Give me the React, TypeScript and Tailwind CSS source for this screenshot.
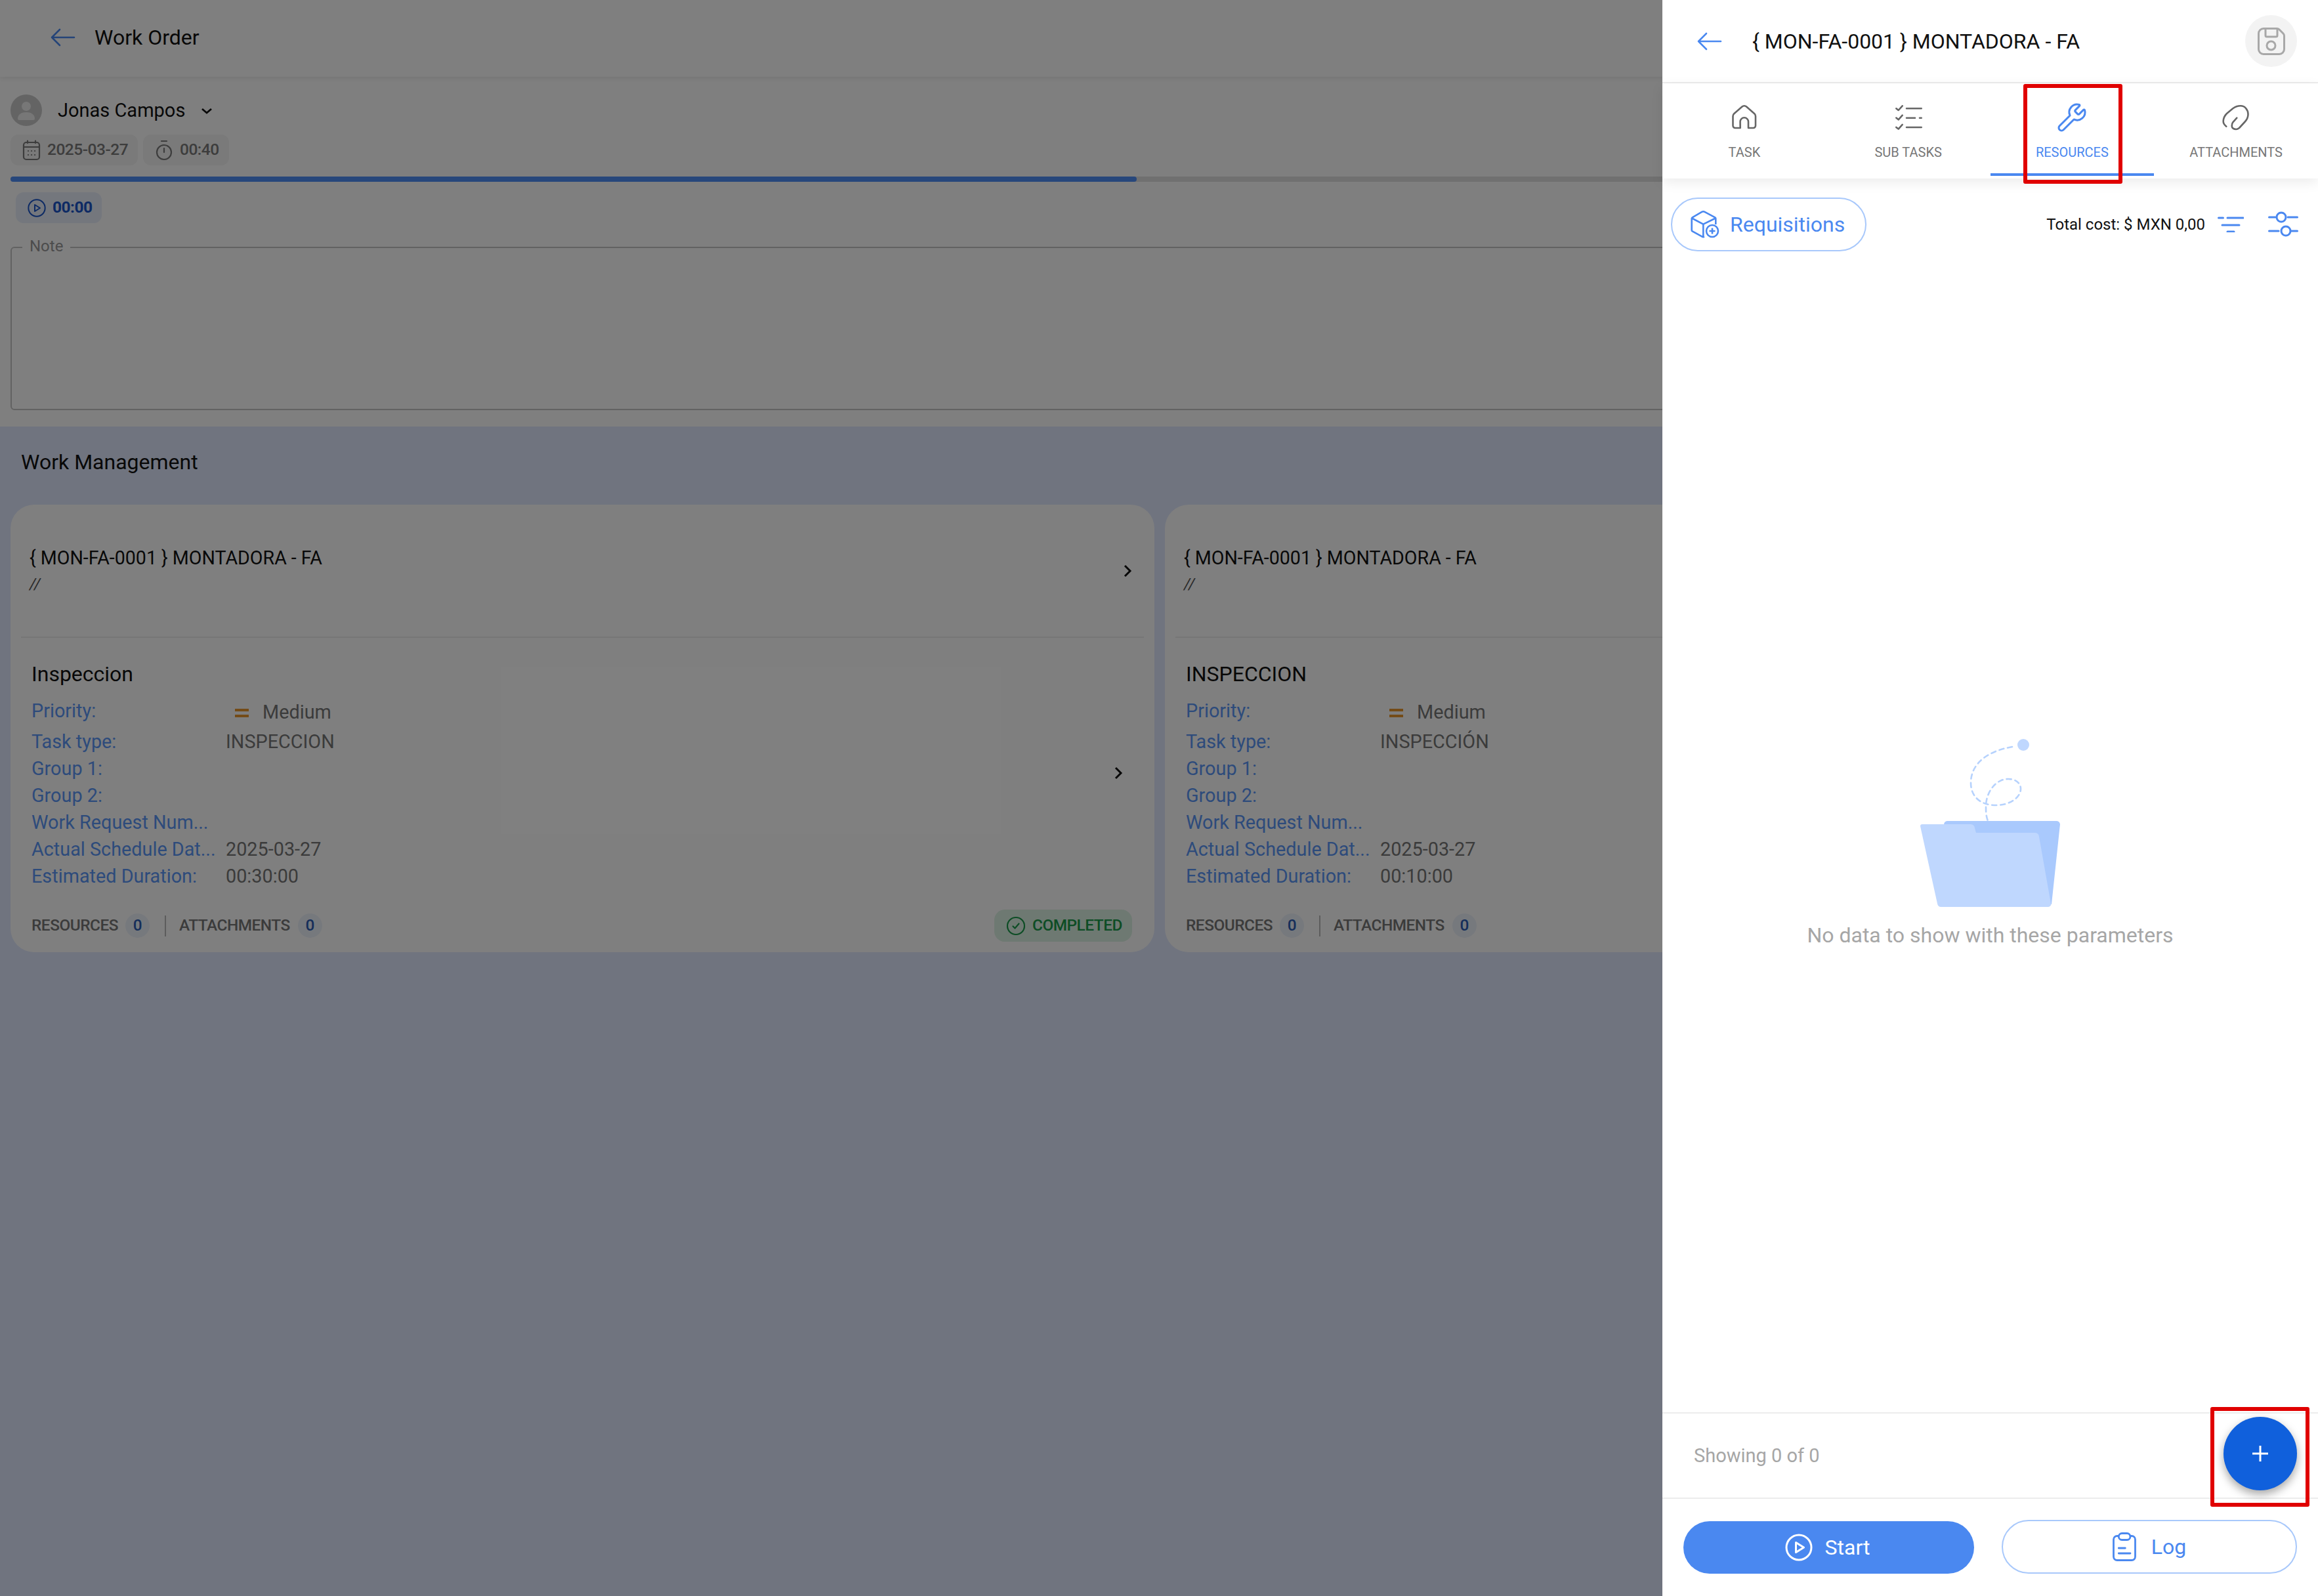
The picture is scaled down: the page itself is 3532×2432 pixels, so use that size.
import React from 'react';
import { Wrench } from 'lucide-react';

const BackArrow = ({ className }: { className: string }) => (
  <svg viewBox="0 0 38 28" className={`h-[28px] w-[38px] flex-none ${className}`} fill="none" stroke="currentColor" strokeWidth="2.6" strokeLinecap="round" strokeLinejoin="round">
    <path d="M36 14H2M14 2 2 14l12 12" />
  </svg>
);

const PlayCircle = ({ className }: { className: string }) => (
  <svg viewBox="0 0 42 42" className={`flex-none ${className}`} fill="none" stroke="currentColor" strokeWidth="3" strokeLinejoin="round">
    <circle cx="21" cy="21" r="19" />
    <path d="M16.5 13.5v15L28.5 21z" />
  </svg>
);

// Card on the dimmed page behind the drawer
const TaskCard = ({ name, taskType, duration, completed }: { name: string; taskType: string; duration: string; completed?: boolean }) => {
  const rows: [string, string][] = [
    ['Task type:', taskType],
    ['Group 1:', ''],
    ['Group 2:', ''],
    ['Work Request Num...', ''],
    ['Actual Schedule Dat...', '2025-03-27'],
    ['Estimated Duration:', duration],
  ];

  return (
    <div className="h-[682px] w-[1743px] flex-none rounded-[36px] bg-white">
      <div className="mx-[16px] flex h-[203px] items-center justify-between border-b-2 border-[#ececec] pl-[13px] pr-[18px]">
        <div>
          <div className="text-[28.6px] leading-[40px] text-[#111]">{'{ MON-FA-0001 } MONTADORA - FA'}</div>
          <div className="text-[24px] italic leading-[40px] text-[#555]">//</div>
        </div>
        <svg viewBox="0 0 14 20" className="h-[20px] w-[14px]" fill="none" stroke="#111" strokeWidth="3"><path d="m3 2 8 8-8 8" /></svg>
      </div>
      <div className="flex items-center justify-between pl-[32px] pr-[48px] pt-[35px]">
        <div>
          <div className="text-[32px] leading-[40px] text-[#111]">{name}</div>
          <div className="mt-[15px] flex h-[48px] items-center">
            <span className="w-[296px] flex-none pb-[5px] text-[28.8px] text-[#5b96f7]">Priority:</span>
            <span className="flex items-center pl-[14px] text-[28.8px] text-[#777]">
              <span className="flex w-[21px] flex-col gap-[5px]">
                <span className="h-[4px] bg-[#e8962f]" />
                <span className="h-[4px] bg-[#e8962f]" />
              </span>
              <span className="ml-[21px]">Medium</span>
            </span>
          </div>
          {rows.map(([label, value]) => (
            <div key={label} className="flex h-[41px] items-center text-[28.8px]">
              <span className="w-[296px] flex-none text-[#5b96f7]">{label}</span>
              <span className="text-[#777]">{value}</span>
            </div>
          ))}
        </div>
        <svg viewBox="0 0 14 20" className="mb-[8px] h-[20px] w-[14px]" fill="none" stroke="#111" strokeWidth="3"><path d="m3 2 8 8-8 8" /></svg>
      </div>
      <div className="mt-[30px] flex h-[49px] items-center justify-between pl-[32px] pr-[34px]">
        <div className="flex items-center text-[24.4px] font-medium tracking-[-0.5px] text-[#777]">
          <span>RESOURCES</span>
          <span className="ml-[11px] flex h-[37px] w-[37px] items-center justify-center rounded-full bg-[#edf2fb] text-[#2a5cb4]">0</span>
          <span className="ml-[23px] h-[32px] w-[2px] bg-[#bbb]" />
          <span className="ml-[20px]">ATTACHMENTS</span>
          <span className="ml-[12px] flex h-[37px] w-[37px] items-center justify-center rounded-full bg-[#edf2fb] text-[#2a5cb4]">0</span>
        </div>
        {completed && (
          <div className="flex h-[49px] w-[210px] items-center gap-[10px] rounded-[16px] bg-[#ddf3e4] pl-[18px] text-[24.4px] font-medium tracking-[-0.5px] text-[#1a9a4a]">
            <svg viewBox="0 0 30 30" className="h-[30px] w-[30px] flex-none" fill="none" stroke="currentColor" strokeWidth="2.2" strokeLinecap="round" strokeLinejoin="round">
              <circle cx="15" cy="15" r="13" />
              <path d="m10.5 15.5 3 3 6-7" />
            </svg>
            COMPLETED
          </div>
        )}
      </div>
    </div>
  );
};

export default function App() {
  return (
    <div className="relative h-[2432px] w-[3532px] overflow-hidden bg-[#e0e8fe] [font-family:Roboto,sans-serif]">
      {/* Page behind the drawer */}
      <div className="relative flex h-[117px] items-center gap-[29px] bg-white pb-[3px] pl-[77px] shadow-[0_3px_8px_rgba(0,0,0,0.08)]">
        <BackArrow className="text-[#4a88f0]" />
        <span className="text-[32px] text-[#111]">Work Order</span>
      </div>

      <div className="h-[533px] bg-white pl-[16px] pr-[16px] pt-[27px]">
        <div className="flex h-[48px] items-center">
          <div className="flex h-[48px] w-[48px] items-end justify-center overflow-hidden rounded-full bg-[#c9c9c9]">
            <svg viewBox="0 0 48 48" className="h-[48px] w-[48px]" fill="#eee">
              <circle cx="24" cy="18" r="7" />
              <path d="M11 37c0-7 6-10 13-10s13 3 13 10c0 1-1 2-2 2H13c-1 0-2-1-2-2z" />
            </svg>
          </div>
          <span className="ml-[24px] pt-[2px] text-[29px] text-[#111]">Jonas Campos</span>
          <svg viewBox="0 0 18 10" className="ml-[24px] mt-[2px] h-[10px] w-[18px]" fill="none" stroke="#111" strokeWidth="2.8"><path d="m2 2 7 6 7-6" /></svg>
        </div>

        <div className="mt-[13px] flex gap-[8px] text-[24.5px] font-medium tracking-[-0.5px] text-[#7a7a7a]">
          <div className="flex h-[47px] w-[194px] items-center rounded-[12px] bg-[#f4f4f4] pl-[18px]">
            <svg viewBox="0 0 28 32" className="h-[32px] w-[28px] flex-none" fill="none" stroke="currentColor" strokeWidth="2.2" strokeLinecap="round">
              <rect x="2" y="4" width="24" height="26" rx="4" />
              <path d="M2 11h24M8 1.5V5M20 1.5V5M9 17h.1M14 17h.1M19 17h.1M9 23h.1M14 23h.1M19 23h.1" />
            </svg>
            <span className="ml-[10px]">2025-03-27</span>
          </div>
          <div className="flex h-[47px] w-[131px] items-center rounded-[12px] bg-[#f4f4f4] pl-[19px]">
            <svg viewBox="0 0 26 32" className="h-[32px] w-[26px] flex-none" fill="none" stroke="currentColor" strokeWidth="2.2" strokeLinecap="round">
              <circle cx="13" cy="19" r="11" />
              <path d="M9 2h8M13 13v6" />
            </svg>
            <span className="ml-[11px]">00:40</span>
          </div>
        </div>

        <div className="mt-[17px] h-[8px] rounded-full bg-[#e0e0e0]">
          <div className="h-[8px] w-[1716px] rounded-full bg-[#4f8ef7]" />
        </div>

        <div className="ml-[8px] mt-[16px] flex h-[47px] w-[131px] items-center rounded-[12px] bg-[#e8effb] pl-[18px] text-[24.5px] font-bold tracking-[-0.5px] text-[#1a55c9]">
          <PlayCircle className="h-[28px] w-[28px]" />
          <span className="ml-[10px]">00:00</span>
        </div>

        <fieldset className="mt-[21px] h-[264px] rounded-[6px] border-2 border-[#c4c4c4] pl-[16px]">
          <legend className="px-[11px] pb-[3px] text-[24px] leading-[28px] text-[#999]">Note</legend>
        </fieldset>
      </div>

      <div className="pl-[16px]">
        <div className="pb-[45px] pl-[16px] pt-[34px] text-[32px] leading-[40px] text-[#111]">Work Management</div>
        <div className="flex gap-[16px]">
          <TaskCard name="Inspeccion" taskType="INSPECCION" duration="00:30:00" completed />
          <TaskCard name="INSPECCION" taskType="INSPECCIÓN" duration="00:10:00" />
        </div>
      </div>

      {/* Dimming layer */}
      <div className="absolute inset-0 bg-black/50" />

      {/* Drawer */}
      <div className="absolute bottom-0 right-0 top-0 flex w-[999px] flex-col bg-white">
        <div className="flex h-[127px] flex-none items-center border-b-2 border-[#ececec] pl-[53px] pr-[32px]">
          <BackArrow className="text-[#4a88f0]" />
          <span className="ml-[46px] pt-[1px] text-[32px] text-[#111]">{'{ MON-FA-0001 } MONTADORA - FA'}</span>
          <button className="ml-auto flex h-[79px] w-[79px] items-center justify-center rounded-full bg-[#f3f3f3]">
            <svg viewBox="0 0 42 42" className="h-[42px] w-[42px]" fill="none" stroke="#a8a8a8" strokeWidth="3" strokeLinejoin="round">
              <path d="M9 1.5h20.5a5 5 0 0 1 3.5 1.5l6 6a5 5 0 0 1 1.5 3.5V33a7.5 7.5 0 0 1-7.5 7.5H9A7.5 7.5 0 0 1 1.5 33V9A7.5 7.5 0 0 1 9 1.5z" />
              <path d="M12 2v10a2 2 0 0 0 2 2h14a2 2 0 0 0 2-2V3" />
              <circle cx="20.5" cy="27.5" r="6.5" />
            </svg>
          </button>
        </div>

        <div className="relative z-10 grid h-[145px] flex-none grid-cols-4 bg-white text-[20px] text-[#777] shadow-[0_6px_18px_rgba(0,0,0,0.08)]">
          <div className="flex flex-col items-center pt-[32px]">
            <svg viewBox="0 0 40 40" className="h-[40px] w-[40px]" fill="none" stroke="#666" strokeWidth="2.6" strokeLinejoin="round">
              <path d="M13.7 36H6a3.5 3.5 0 0 1-3.5-3.5V18a5 5 0 0 1 1.7-3.7L16.5 3.5a5 5 0 0 1 6.6 0l12.2 10.8a5 5 0 0 1 1.7 3.7v14.5a3.5 3.5 0 0 1-3.5 3.5H26v-9.5a6.2 6.2 0 0 0-12.4 0z" />
            </svg>
            <span className="mt-[21px] leading-[25px]">TASK</span>
          </div>
          <div className="flex flex-col items-center pt-[32px]">
            <svg viewBox="0 0 42 40" className="h-[40px] w-[42px]" fill="none" stroke="#666" strokeWidth="2.6" strokeLinecap="round" strokeLinejoin="round">
              <path d="M2.3 6.3 5.7 9l6-6.7M2.3 20.6l3.4 2.7 6-6.7M2.3 34.9l3.4 2.7 6-6.7" />
              <path d="M18 6.3h22.7M18 20.7h13M38 20.7h2.7M18 35h22.7" />
            </svg>
            <span className="mt-[21px] leading-[25px]">SUB TASKS</span>
          </div>
          <div className="relative flex flex-col items-center pt-[28px] text-[#4a88f0]">
            <Wrench className="h-[48px] w-[48px]" strokeWidth={1.5} />
            <span className="mt-[17px] leading-[25px]">RESOURCES</span>
            <div className="absolute bottom-[4px] left-0 right-0 h-[4px] bg-[#4a88f0]" />
          </div>
          <div className="flex flex-col items-center pt-[32px]">
            <svg viewBox="0 0 44 40" className="h-[40px] w-[44px]" fill="none" stroke="#666" strokeWidth="2.6" strokeLinecap="round" strokeLinejoin="round">
              <path d="M7.3 33.7C4 31 2.5 28 2.7 25.3 3 21 5 17 8 14L17 6.5C21 3.500 25 2.300 29 2.300 35.500 2.300 40.500 8 40.500 15 40.500 19.500 38.500 23.500 35.700 26.500L27 36C25 37.500 23.500 38 22.300 38 18.500 38 15.700 36 15.700 33 15.700 31 16 29 17.300 27.300L23.300 20.700" />
            </svg>
            <span className="mt-[21px] leading-[25px]">ATTACHMENTS</span>
          </div>
        </div>

        <div className="flex h-[111px] flex-none items-end justify-between pl-[13px] pr-[30px]">
          <button className="flex h-[82px] w-[298px] items-center rounded-full border-2 border-[#a8c8fb] pl-[28px] text-[32px] text-[#4a88f0]">
            <svg viewBox="0 0 44 42" className="h-[42px] w-[44px] flex-none" fill="none" stroke="currentColor" strokeWidth="2.6" strokeLinejoin="round">
              <path d="M38.3 21V12a2 2 0 0 0-1-1.700L21 1.700a4 4 0 0 0-3.400 0L2.700 10.300a2 2 0 0 0-1 1.700v17.700a2 2 0 0 0 1 1.700l15 8.300a4 4 0 0 0 3.300 0" />
              <path d="M2 11.500l17.300 9.200 18.700-9.200M19.300 20.700v19" />
              <circle cx="33" cy="31" r="9" />
              <path d="M33 26.500v9M28.500 31h9" />
            </svg>
            <span className="ml-[16px]">Requisitions</span>
          </button>
          <div className="flex h-[82px] items-center">
            <span className="text-[24px] text-[#111]">Total cost: $ MXN 0,00</span>
            <svg viewBox="0 0 40 24" className="ml-[19px] h-[24px] w-[40px]" fill="none" stroke="#4a88f0" strokeWidth="3" strokeLinecap="round">
              <path d="M1.500 2h7M15 2h24M7 13h26M15 23h10" />
            </svg>
            <svg viewBox="0 0 46 40" className="ml-[37px] h-[40px] w-[46px]" fill="none" stroke="#4a88f0" strokeWidth="3" strokeLinecap="round">
              <path d="M1.500 9H11M30 9h14.500M1.500 30H16M35 30h9.500" />
              <circle cx="20" cy="9" r="7" />
              <circle cx="27" cy="30" r="7" />
            </svg>
          </div>
        </div>

        <div className="flex flex-1 flex-col items-center pt-[742px]">
          <svg viewBox="0 0 213 257" className="h-[257px] w-[213px]">
            <circle cx="157" cy="10" r="9" fill="#bfd7fe" />
            <path d="M140 13C100 20 77 40 77 68c0 22 16 34 38 34 22 0 38-12 38-25 0-9-8-15-19-15-19 0-34 20-34 42 0 8 0 14 3 22 2 5 4 8 8 13" fill="none" stroke="#b6d2fd" strokeWidth="2.6" strokeDasharray="7 6" strokeLinecap="round" />
            <path d="M36 131a6 6 0 0 1 5-5h166a6 6 0 0 1 6 5l-13 122-164-20z" fill="#a9c9fd" />
            <path d="M0 134a3 3 0 0 1 3-3h74a6 6 0 0 1 6 6l2 7h90a6 6 0 0 1 6 6l18 102c1 4-3 5-6 5H32a6 6 0 0 1-6-5L0 134z" fill="#bfd7fe" />
          </svg>
          <span className="mt-[23px] text-[32px] leading-[40px] text-[#a6a6a6]">No data to show with these parameters</span>
        </div>

        <div className="flex h-[132px] flex-none items-center justify-between border-b-2 border-t-2 border-[#ececec] pl-[48px] pr-[32px]">
          <span className="pt-[1px] text-[29px] text-[#a6a6a6]">Showing 0 of 0</span>
          <button className="mb-[6px] flex h-[112px] w-[112px] items-center justify-center rounded-full bg-[#1060dc] shadow-[0_6px_14px_rgba(0,0,0,0.35)]">
            <svg viewBox="0 0 26 26" className="h-[26px] w-[26px]" fill="none" stroke="#fff" strokeWidth="3"><path d="M13 1v24M1 13h24" /></svg>
          </button>
        </div>

        <div className="flex h-[148px] flex-none justify-between pl-[32px] pr-[32px] pt-[32px] text-[32px]">
          <button className="mt-[2px] flex h-[80px] w-[443px] items-center justify-center gap-[19px] rounded-full bg-[#4a88f0] pr-[4px] text-white">
            <PlayCircle className="h-[42px] w-[42px]" />
            Start
          </button>
          <button className="flex h-[82px] w-[450px] items-center justify-center gap-[23px] rounded-full border-2 border-[#a8c8fb] text-[#4a88f0]">
            <svg viewBox="0 0 36 44" className="h-[44px] w-[36px]" fill="none" stroke="currentColor" strokeWidth="2.8" strokeLinecap="round">
              <path d="M9 5.500H7a5.500 5.500 0 0 0-5.500 5.500v26A5.500 5.500 0 0 0 7 42.500h22a5.500 5.500 0 0 0 5.500-5.500V11A5.500 5.500 0 0 0 29 5.500h-2" />
              <rect x="9.3" y="1.5" width="17.7" height="10" rx="5" />
              <path d="M9.3 24h10M9.3 32h17.700" />
            </svg>
            Log
          </button>
        </div>

        {/* Red annotation boxes */}
        <div className="absolute left-[550px] top-[128px] z-20 h-[152px] w-[151px] rounded-[3px] border-[6px] border-[#e00000]" />
        <div className="absolute left-[835px] top-[2144px] z-20 h-[152px] w-[151px] rounded-[3px] border-[6px] border-[#e00000]" />
      </div>
    </div>
  );
}
